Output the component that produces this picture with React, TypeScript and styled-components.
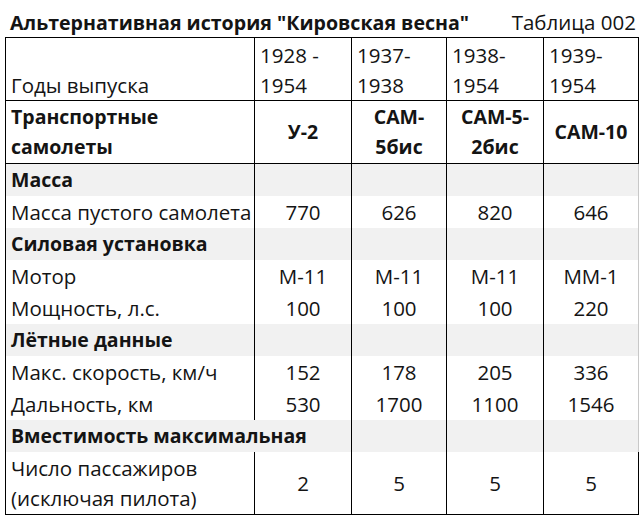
import styled, { createGlobalStyle } from 'styled-components';

const GlobalStyle = createGlobalStyle`
  html, body {
    margin: 0;
    background: #fff;
  }
  body {
    font-family: "Open Sans", "Noto Sans", sans-serif;
    color: #141414;
  }
`;

const Page = styled.div`
  width: 644px;
  height: 524px;
  padding: 8px 0 0 5px;
  box-sizing: border-box;
`;

const TitleBar = styled.div`
  display: flex;
  justify-content: space-between;
  align-items: baseline;
  height: 29px;
  padding: 0 8px 0 5px;
  font-size: 20.5px;
  line-height: 28px;
`;

const Title = styled.span`
  font-weight: 700;
  font-size: 19.6px;
`;

const Sheet = styled.table`
  border-collapse: collapse;
  table-layout: fixed;
  width: 633px;
  font-size: 20.5px;
`;

const Row = styled.tr<{ $shade?: boolean; $tall?: boolean }>`
  height: ${({ $tall }) => ($tall ? 63 : 32)}px;
  background: ${({ $shade }) => ($shade ? '#f1f1f1' : '#fff')};
`;

const Cell = styled.td<{
  $align?: 'left' | 'center';
  $valign?: 'middle' | 'bottom';
  $bold?: boolean;
  $edge?: 'dark' | 'light';
}>`
  padding: 0 0 0 5px;
  text-align: ${({ $align = 'left' }) => $align};
  vertical-align: ${({ $valign = 'middle' }) => $valign};
  font-weight: ${({ $bold }) => ($bold ? 700 : 400)};
  font-size: ${({ $bold }) => ($bold ? '19.5px' : '20.5px')};
  line-height: 30px;
  white-space: nowrap;
  overflow: visible;
  border-left: 1px solid #000;
  ${({ $edge }) =>
    $edge ? `border-right: 1px solid ${$edge === 'dark' ? '#000' : '#c8c8c8'};` : ''}
  ${({ $align }) => ($align === 'center' ? 'padding: 0;' : '')}
`;

const HeadRow = styled(Row)`
  & > td {
    border-top: 1px solid #000;
    border-bottom: 1px solid #000;
  }
`;

const LastRow = styled(Row)`
  & > td {
    border-bottom: 1px solid #000;
  }
`;

type Section = { title: string; wide?: boolean };
type Line = { label: string; values: string[] };

const years = ['1928 -\n1954', '1937-\n1938', '1938-\n1954', '1939-\n1954'];
const planes = ['У-2', 'САМ-\n5бис', 'САМ-5-\n2бис', 'САМ-10'];
const widths = [249, 97, 95, 97, 95];

const body: (Section | Line)[] = [
  { title: 'Масса' },
  { label: 'Масса пустого самолета', values: ['770', '626', '820', '646'] },
  { title: 'Силовая установка' },
  { label: 'Мотор', values: ['М-11', 'М-11', 'М-11', 'ММ-1'] },
  { label: 'Мощность, л.с.', values: ['100', '100', '100', '220'] },
  { title: 'Лётные данные' },
  { label: 'Макс. скорость, км/ч', values: ['152', '178', '205', '336'] },
  { label: 'Дальность, км', values: ['530', '1700', '1100', '1546'] },
  { title: 'Вместимость максимальная', wide: true },
];

const Multi = ({ text }: { text: string }) => (
  <>
    {text.split('\n').map((t, i) => (
      <div key={i}>{t}</div>
    ))}
  </>
);

export default function App() {
  return (
    <Page>
      <GlobalStyle />
      <TitleBar>
        <Title>Альтернативная история "Кировская весна"</Title>
        <span>Таблица 002</span>
      </TitleBar>
      <Sheet>
        <colgroup>
          {widths.map((w, i) => (
            <col key={i} style={{ width: w }} />
          ))}
        </colgroup>
        <tbody>
          <HeadRow $tall>
            <Cell $valign="bottom">Годы выпуска</Cell>
            {years.map((y, i) => (
              <Cell key={y} $valign="bottom" $edge={i === 3 ? 'dark' : undefined}>
                <Multi text={y} />
              </Cell>
            ))}
          </HeadRow>
          <HeadRow $tall>
            <Cell $bold>
              <Multi text={'Транспортные\nсамолеты'} />
            </Cell>
            {planes.map((p, i) => (
              <Cell key={p} $bold $align="center" $edge={i === 3 ? 'dark' : undefined}>
                <Multi text={p} />
              </Cell>
            ))}
          </HeadRow>
          {body.map((r, idx) =>
            'title' in r ? (
              <Row key={idx} $shade>
                <Cell $bold colSpan={r.wide ? 2 : 1}>
                  {r.title}
                </Cell>
                {Array.from({ length: r.wide ? 3 : 4 }).map((_, i, a) => (
                  <Cell key={i} $edge={i === a.length - 1 ? 'light' : undefined} />
                ))}
              </Row>
            ) : (
              <Row key={idx}>
                <Cell>{r.label}</Cell>
                {r.values.map((v, i) => (
                  <Cell key={i} $align="center" $edge={i === 3 ? 'light' : undefined}>
                    {v}
                  </Cell>
                ))}
              </Row>
            ),
          )}
          <LastRow $tall>
            <Cell>
              <Multi text={'Число пассажиров\n(исключая пилота)'} />
            </Cell>
            {['2', '5', '5', '5'].map((v, i) => (
              <Cell key={i} $align="center" $edge={i === 3 ? 'dark' : undefined}>
                {v}
              </Cell>
            ))}
          </LastRow>
        </tbody>
      </Sheet>
    </Page>
  );
}
